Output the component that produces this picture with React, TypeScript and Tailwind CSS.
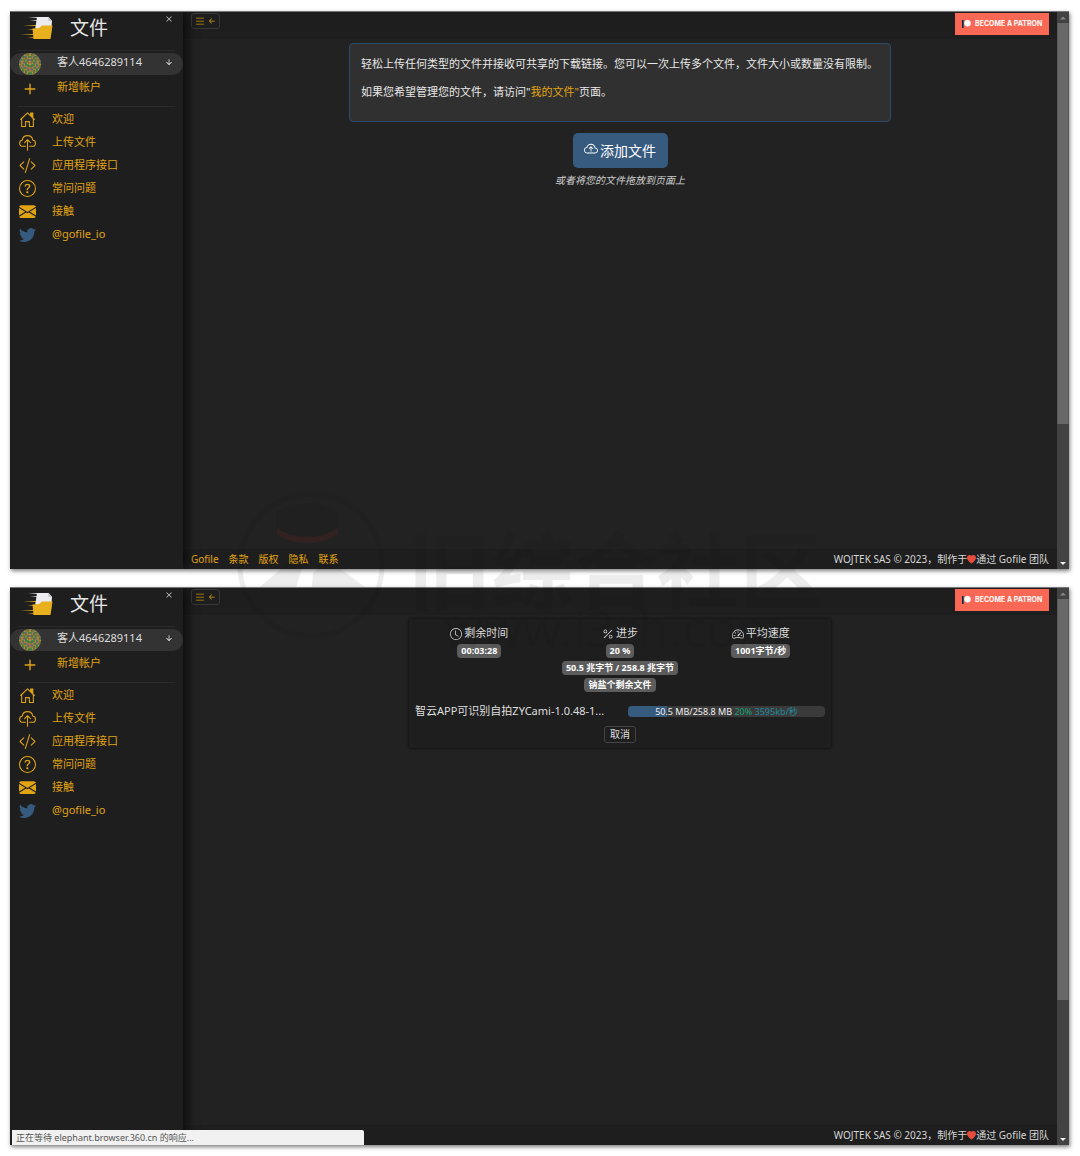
import type { ReactNode } from "react";
import {
  BsArrowDownShort,
  BsArrowLeftShort,
  BsClock,
  BsCloudArrowUp,
  BsCodeSlash,
  BsEnvelopeFill,
  BsHeartFill,
  BsList,
  BsPercent,
  BsPlus,
  BsQuestionCircle,
  BsSpeedometer2,
  BsTwitter,
  BsX,
} from "react-icons/bs";

interface MenuItem {
  label: string;
  icon: ReactNode;
}

function HouseIcon() {
  return (
    <svg viewBox="0 0 16 16" className="size-[1em]" fill="none" stroke="currentColor" aria-hidden="true">
      <path d="M1.500 8L8 1.700 14.500 8" strokeLinecap="round" strokeLinejoin="round" />
      <path d="M2.500 7.200V14.500H6.200V10h3.600v4.500h3.700V7.200" strokeLinejoin="round" />
      <path d="M11 2h2v4l-2-2z" fill="currentColor" />
    </svg>
  );
}

function CloudUploadIcon() {
  return (
    <svg viewBox="0 0 16 16" className="size-[1em]" fill="none" stroke="currentColor" aria-hidden="true">
      <path
        d="M6 11.500H3.700C2 11.500.600 10.300.600 8.600c0-1.500 1-2.500 2.500-2.900C3.400 3.300 5.400 1.500 8 1.500c2.500 0 4.600 1.800 4.900 4.200 1.500.200 2.600 1.400 2.600 2.900 0 1.600-1.300 2.900-3 2.900H10"
        strokeLinecap="round"
      />
      <path d="M8 15.200V5.500M5.200 8.200L8 5.400l2.800 2.800" strokeLinecap="round" strokeLinejoin="round" />
    </svg>
  );
}

const menuItems: MenuItem[] = [
  { label: "欢迎", icon: <HouseIcon /> },
  { label: "上传文件", icon: <CloudUploadIcon /> },
  { label: "应用程序接口", icon: <BsCodeSlash /> },
  { label: "常问问题", icon: <BsQuestionCircle /> },
  { label: "接触", icon: <BsEnvelopeFill /> },
  { label: "@gofile_io", icon: <BsTwitter className="text-[#375a7f]" /> },
];

const footerLinks = ["Gofile", "条款", "版权", "隐私", "联系"];

// Left half of the identicon, mirrored when drawn
const avatarRows = [
  "gyogygo",
  "ygpyogy",
  "oyggpyg",
  "gpyogoy",
  "ygogygp",
  "pyygogy",
  "goypgyo",
  "yogyggy",
  "gypoygg",
  "ogygpyo",
  "gygoygp",
  "pogygoy",
  "ygpogyg",
  "goygyog",
];

const avatarColors: Record<string, string> = {
  g: "#3f8a4c",
  y: "#a99640",
  o: "#c07a35",
  p: "#94609a",
};

function Logo() {
  return (
    <svg viewBox="0 0 34 24" className="w-[34px] h-6 shrink-0" aria-hidden="true">
      <defs>
        <linearGradient id="trail" x1="0" x2="1">
          <stop offset="0" stopColor="#e8b01e" stopOpacity="0" />
          <stop offset="1" stopColor="#e8b01e" />
        </linearGradient>
        <linearGradient id="trailWhite" x1="0" x2="1">
          <stop offset="0" stopColor="#e9e9ee" stopOpacity="0" />
          <stop offset="1" stopColor="#e9e9ee" />
        </linearGradient>
      </defs>
      <path d="M17 1h11.500l3.500 4-1 12H14.500z" fill="#ebebf0" />
      <path d="M28.500 1l-.500 4h4z" fill="#c9c9cf" />
      <path d="M12.500 12.500l6.500-.500 3-2.500h10.500L30.500 23H13.500z" fill="#e8b01e" />
      <rect x="8" y="1" width="10" height="1" fill="url(#trailWhite)" />
      <rect x="10" y="4" width="8" height="1" fill="url(#trailWhite)" />
      <rect x="3" y="9" width="13" height="1" fill="url(#trail)" />
      <rect x="7" y="13" width="8" height="1" fill="url(#trail)" />
      <rect x="0" y="18" width="15" height="1" fill="url(#trail)" />
      <rect x="7" y="21" width="8" height="1" fill="url(#trail)" />
    </svg>
  );
}

function Avatar() {
  return (
    <svg viewBox="0 0 14 14" className="size-[22px] rounded-full shrink-0" aria-hidden="true">
      {avatarRows.map((row, y) =>
        [...row, ...[...row].reverse()].map((c, x) => (
          <rect key={`${x}-${y}`} x={x} y={y} width="1.05" height="1.05" fill={avatarColors[c]} />
        ))
      )}
    </svg>
  );
}

function Sidebar() {
  return (
    <aside className="relative z-10 w-[173px] shrink-0 bg-[#1e1e1e] shadow-[4px_0_10px_rgba(0,0,0,0.65)]">
      <div className="relative flex items-center h-[38px] pl-2.5 pb-1.5">
        <Logo />
        <h1 className="ml-4 text-[19px] leading-7 text-[#e6e6e6]">文件</h1>
        <button type="button" aria-label="关闭" className="absolute right-2 top-px text-[#c8c8c8]">
          <BsX className="size-3" />
        </button>
      </div>
      <hr className="mx-2 border-[#2b2b2b]" />
      <button
        type="button"
        className="mt-0.5 flex w-full h-[22px] items-center rounded-full bg-[#333333] pl-[9px] pr-2 text-left text-[11px] text-[#dedede]"
      >
        <Avatar />
        <span className="ml-4 pb-1 flex-1">客人4646289114</span>
        <BsArrowDownShort className="size-3 mb-1" />
      </button>
      <a href="#account" className="flex h-7 items-center pl-[9px] text-[11px] text-[#e0a414]">
        <BsPlus className="size-[22px]" />
        <span className="ml-4 pb-1">新增帐户</span>
      </a>
      <hr className="mx-2 mt-[3px] border-[#2b2b2b]" />
      <nav className="mt-px flex flex-col">
        {menuItems.map((item) => (
          <a key={item.label} href="#menu" className="flex h-[23px] items-center pl-[9px] text-[11px] text-[#e0a414]">
            <span className="text-[17px] leading-none">{item.icon}</span>
            <span className="ml-4 pb-px">{item.label}</span>
          </a>
        ))}
      </nav>
    </aside>
  );
}

function Scrollbar() {
  return (
    <div className="flex w-3 shrink-0 flex-col items-center bg-[#424242]" aria-hidden="true">
      <svg viewBox="0 0 12 11" className="h-[11px] w-3 shrink-0">
        <path d="M3 7.500h6L6 4.500z" fill="#868686" />
      </svg>
      <div className="h-[72%] w-full border-x border-[#585858] bg-[#686868]" />
      <svg viewBox="0 0 12 12" className="mt-auto size-3 shrink-0">
        <path d="M3 5h6L6 8z" fill="#f0f0f0" />
      </svg>
    </div>
  );
}

function TopBar() {
  return (
    <header className="flex h-[27px] shrink-0 items-start justify-between bg-[#1e1e1e] pl-2 pr-2">
      <button
        type="button"
        aria-label="菜单"
        className="mt-px flex h-4 w-[29px] items-center justify-center rounded-[3px] border border-[#383838] text-[#c8930f]"
      >
        <BsList className="size-3" />
        <BsArrowLeftShort className="size-3" />
      </button>
      <a
        href="#patron"
        className="mt-px flex h-[22px] w-[94px] items-center bg-[#f96854] pl-1.5 font-[Inter,sans-serif] text-[7px] font-bold whitespace-nowrap text-white"
      >
        <svg viewBox="0 0 10 10" className="mr-1 size-2.5 shrink-0" aria-hidden="true">
          <rect x="1" y="1" width="1.600" height="8" fill="#052d49" />
          <circle cx="6.500" cy="4.200" r="3.200" fill="#fff" />
        </svg>
        BECOME A PATRON
      </a>
    </header>
  );
}

function Footer({ showLinks }: { showLinks: boolean }) {
  return (
    <footer className="flex h-5 shrink-0 items-center justify-between bg-[#1e1e1e] px-2 text-[10px]">
      <nav className="flex gap-[10px] text-[#e0a414]">
        {showLinks &&
          footerLinks.map((link) => (
            <a key={link} href="#footer">
              {link}
            </a>
          ))}
      </nav>
      <p className="flex items-center text-[#d6d6d6]">
        WOJTEK SAS © 2023，制作于
        <BsHeartFill className="size-[9px] text-[#e74c3c]" />
        通过 Gofile 团队
      </p>
    </footer>
  );
}

function Screen({ children, showLinks = true }: { children: ReactNode; showLinks?: boolean }) {
  return (
    <section className="flex flex-1 shadow-[1px_2px_4px_rgba(0,0,0,0.5)]">
      <div className="relative flex min-w-0 flex-1 overflow-hidden border-t border-[#777777] bg-[#222222]">
        <Sidebar />
        <div className="flex min-w-0 flex-1 flex-col">
          <TopBar />
          <main className="flex flex-1 flex-col items-center">{children}</main>
          <Footer showLinks={showLinks} />
        </div>
        <Scrollbar />
        {!showLinks && (
          <div className="absolute bottom-0 left-0.5 z-20 h-[15px] w-[352px] rounded-tr-xs bg-[#f1f1f1] pl-1 text-[9px] leading-[15px] text-[#555555]">
            正在等待 elephant.browser.360.cn 的响应...
          </div>
        )}
      </div>
    </section>
  );
}

function UploadStart() {
  return (
    <>
      <div className="mt-1 h-[79px] w-full max-w-[542px] rounded-sm border border-[#2f4a6c] bg-[#303030] px-[11px] pt-[11px] text-[11px] leading-[18px] text-[#e8e8e8]">
        <p>轻松上传任何类型的文件并接收可共享的下载链接。您可以一次上传多个文件，文件大小或数量没有限制。</p>
        <p className="mt-[10px]">
          如果您希望管理您的文件，请访问"
          <a href="#files" className="text-[#e0a414]">
            我的文件"
          </a>
          页面。
        </p>
      </div>
      <button
        type="button"
        className="mt-[11px] flex h-[35px] w-[95px] items-center justify-center gap-0.5 rounded-[5px] bg-[#375a7f] text-[14px] text-white"
      >
        <BsCloudArrowUp className="size-[14px] mb-1" />
        添加文件
      </button>
      <p className="mt-1 text-[10px] leading-4 italic text-[#d0d0d0]">或者将您的文件拖放到页面上</p>
    </>
  );
}

function Badge({ children }: { children: ReactNode }) {
  return (
    <span className="h-[14px] rounded-[4px] bg-[#5c5c5c] px-1 text-[9px] leading-[14px] font-bold whitespace-nowrap text-white">
      {children}
    </span>
  );
}

function StatTitle({ icon, children }: { icon: ReactNode; children: ReactNode }) {
  return (
    <h2 className="flex h-[15px] items-center gap-0.5 text-[11px] text-[#dedede]">
      <span className="text-[12px]">{icon}</span>
      {children}
    </h2>
  );
}

function UploadProgress() {
  return (
    <div className="mt-1 flex w-full max-w-[422px] flex-col bg-[#1e1e1e] pt-[7px] pb-[5px] shadow-[0_0_3px_rgba(0,0,0,0.8)]">
      <div className="grid grid-cols-3 text-center">
        <div className="flex flex-col items-center gap-[3px]">
          <StatTitle icon={<BsClock />}>剩余时间</StatTitle>
          <Badge>00:03:28</Badge>
        </div>
        <div className="flex flex-col items-center gap-[3px]">
          <StatTitle icon={<BsPercent />}>进步</StatTitle>
          <Badge>20 %</Badge>
          <Badge>50.5 兆字节 / 258.8 兆字节</Badge>
          <Badge>钠盐个剩余文件</Badge>
        </div>
        <div className="flex flex-col items-center gap-[3px]">
          <StatTitle icon={<BsSpeedometer2 />}>平均速度</StatTitle>
          <Badge>1001字节/秒</Badge>
        </div>
      </div>
      <div className="mt-[9px] flex items-center justify-between px-1.5">
        <p className="text-[11px] leading-5 whitespace-nowrap text-[#dedede]">智云APP可识别自拍ZYCami-1.0.48-1...</p>
        <div className="relative h-[11px] w-[197px] overflow-hidden rounded-[4px] bg-[#3a3a3a] text-center text-[9px] leading-[11px]">
          <div className="h-full w-1/5 bg-[#375a7f]" />
          <p className="absolute inset-0 text-[#f0f0f0]">
            50.5 MB/258.8 MB <span className="text-[#15a078]">20%</span> <span className="text-[#1f8a9c]">3595kb/秒</span>
          </p>
        </div>
      </div>
      <button
        type="button"
        className="mt-[5px] h-[17px] w-8 self-center rounded-[3px] border border-[#444444] text-[10px] leading-[15px] text-[#dedede]"
      >
        取消
      </button>
    </div>
  );
}

function Watermark() {
  return (
    <div className="pointer-events-none absolute top-[490px] left-[236px] z-30 flex opacity-[0.07]" aria-hidden="true">
      <svg viewBox="0 0 150 150" className="size-[150px]">
        <circle cx="75" cy="75" r="71" fill="none" stroke="#101010" strokeWidth="5" />
        <path d="M40 22c20-12 42-12 62 0v18c-17 12-45 12-62 0z" fill="#101010" />
        <path d="M24 97l28-24 14 6-6 18zM76 97l1-14 10-9 15 3 27 20z" fill="#101010" />
        <path d="M41 38c16 12 44 12 61 0v6c-17 12-45 12-61 0z" fill="#ff2a1a" />
      </svg>
      <div className="ml-[22px] pt-[34px] text-[#101010]">
        <p className="font-['Noto_Sans_CJK_SC',sans-serif] text-[83px] leading-[84px] font-bold">旧综合社区</p>
        <p className="ml-9 text-[50px] leading-10">www.i3zh.com</p>
      </div>
    </div>
  );
}

export default function App() {
  return (
    <div className="relative flex min-h-screen flex-col gap-[18px] bg-white py-[11px] pr-[11px] pl-2.5 font-['Noto_Sans','Noto_Sans_CJK_SC',sans-serif]">
      <Screen>
        <UploadStart />
      </Screen>
      <Screen showLinks={false}>
        <UploadProgress />
      </Screen>
      <Watermark />
    </div>
  );
}
